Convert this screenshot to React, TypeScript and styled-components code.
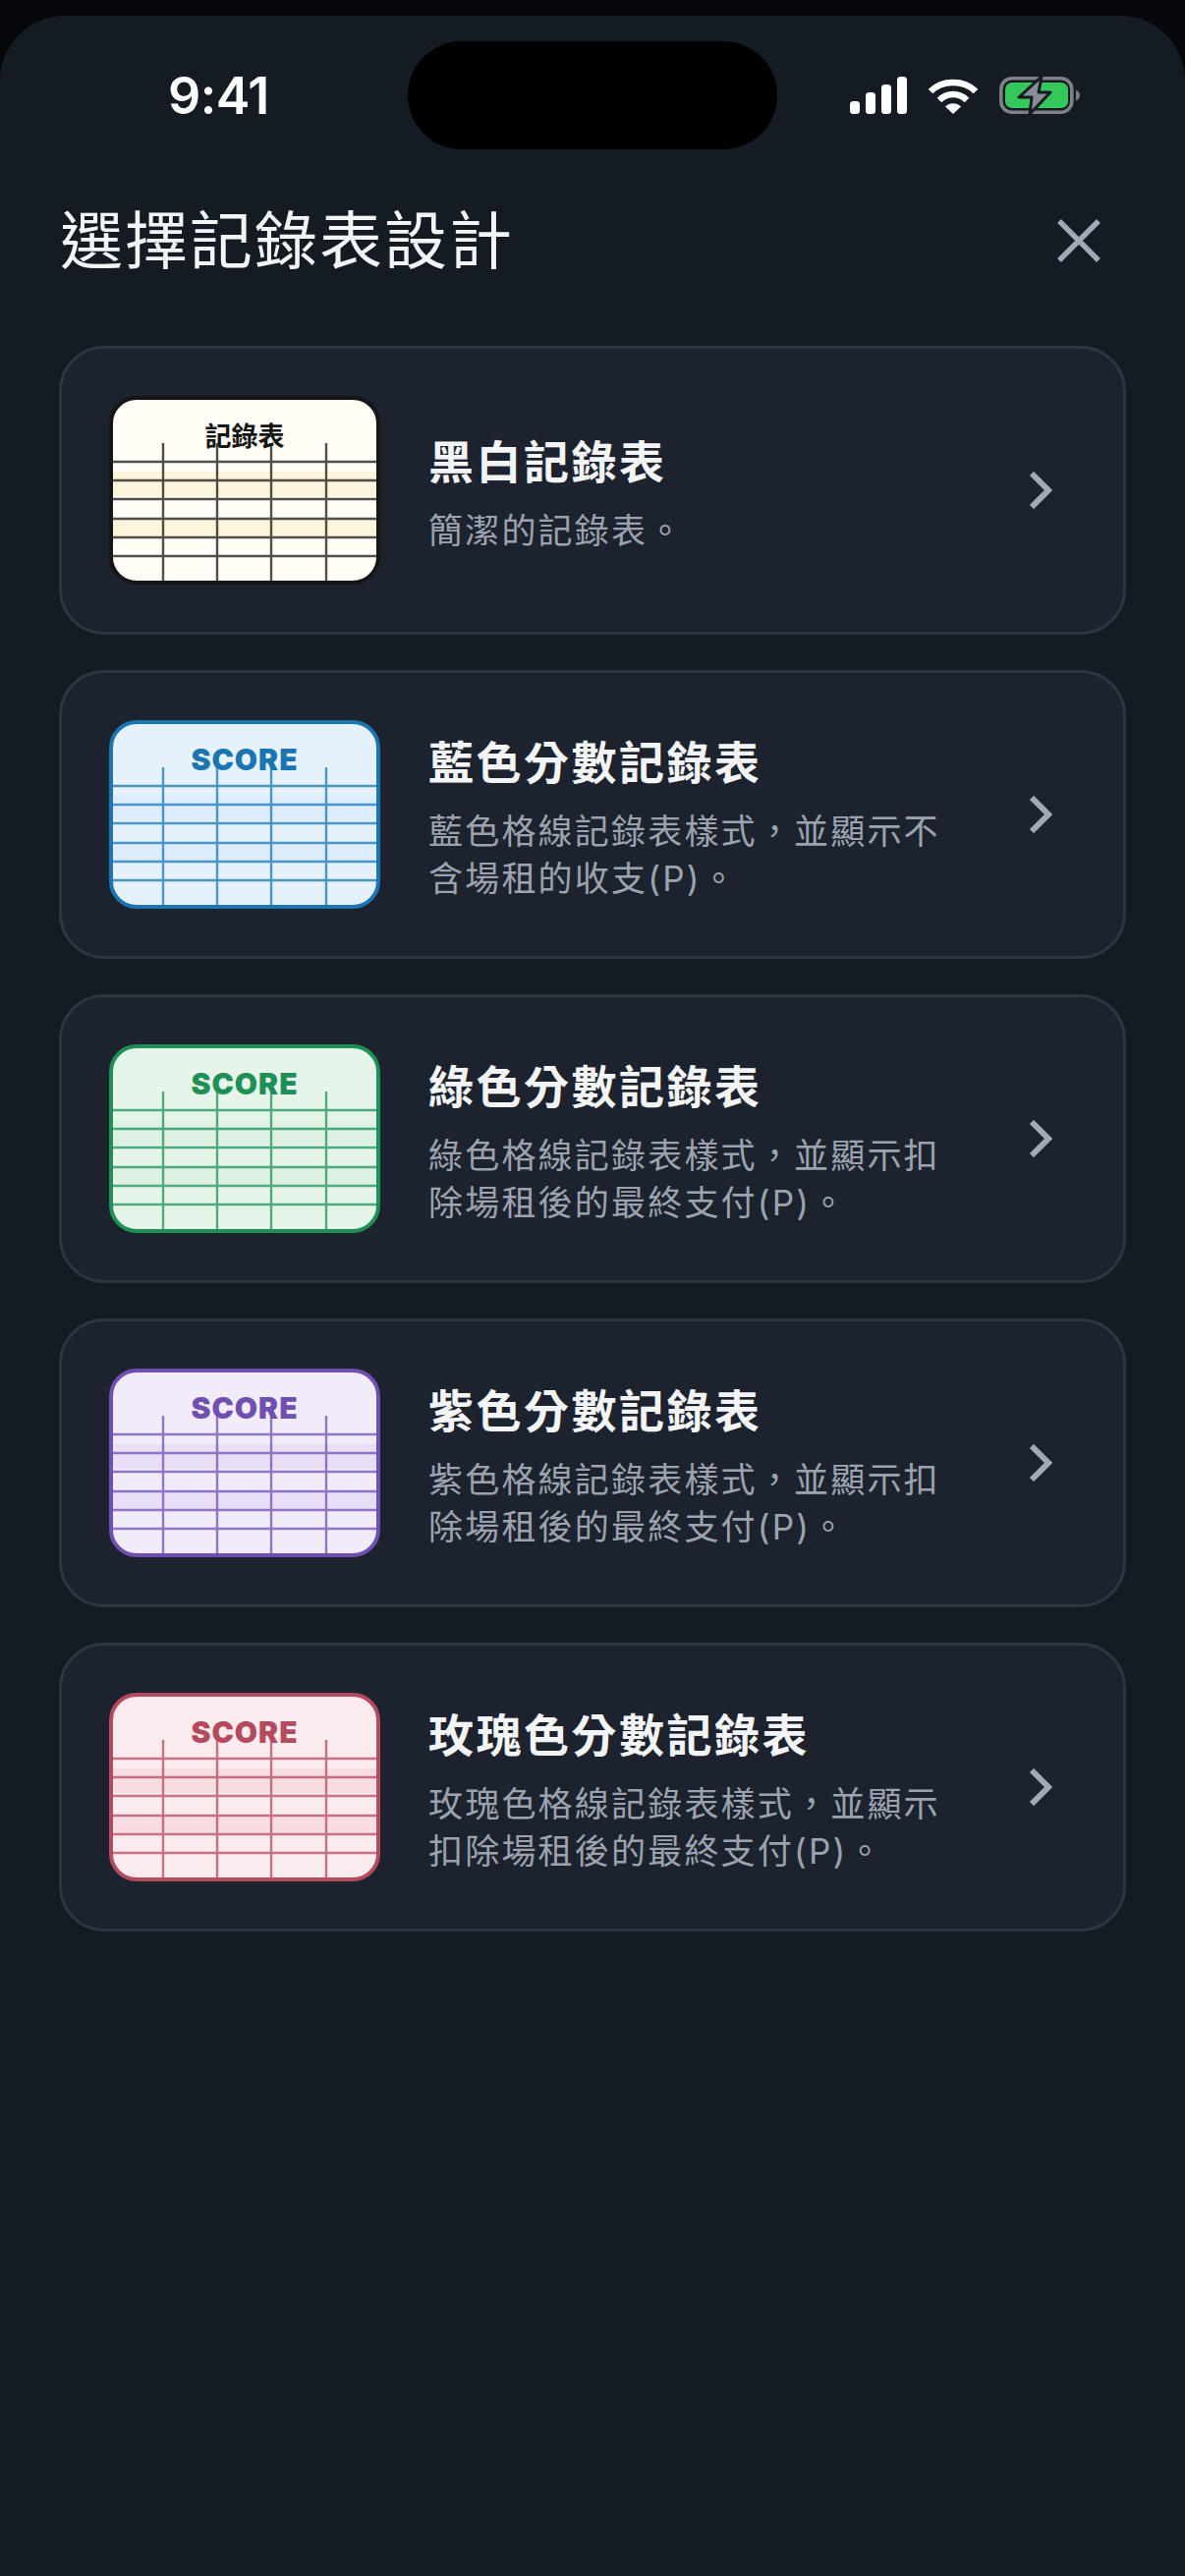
import styled, { createGlobalStyle } from "styled-components";

interface Palette {
  accent: string;
  paper: string;
  stripe: string;
}

interface Template {
  id: string;
  heading: string;
  label: string;
  description: string;
  palette: Palette;
}

const templates: Template[] = [
  {
    id: "mono",
    heading: "黑白記錄表",
    label: "記錄表",
    description: "簡潔的記錄表。",
    palette: { accent: "#151515", paper: "#fffdf6", stripe: "#fdf4dc" },
  },
  {
    id: "blue",
    heading: "藍色分數記錄表",
    label: "SCORE",
    description: "藍色格線記錄表樣式，並顯示不含場租的收支(P)。",
    palette: { accent: "#1a75b0", paper: "#e5f2fc", stripe: "#dcedfd" },
  },
  {
    id: "green",
    heading: "綠色分數記錄表",
    label: "SCORE",
    description: "綠色格線記錄表樣式，並顯示扣除場租後的最終支付(P)。",
    palette: { accent: "#1f8f58", paper: "#e5f5ea", stripe: "#ddf2e4" },
  },
  {
    id: "purple",
    heading: "紫色分數記錄表",
    label: "SCORE",
    description: "紫色格線記錄表樣式，並顯示扣除場租後的最終支付(P)。",
    palette: { accent: "#6f4fb0", paper: "#f2ecfa", stripe: "#e8def5" },
  },
  {
    id: "rose",
    heading: "玫瑰色分數記錄表",
    label: "SCORE",
    description: "玫瑰色格線記錄表樣式，並顯示扣除場租後的最終支付(P)。",
    palette: { accent: "#b34a5e", paper: "#fcebee", stripe: "#f8dde2" },
  },
];

const rowLines = [67, 86, 105, 125, 144, 163];
const columnLines = [55, 110, 165, 221];

const Sheet = ({ label, palette }: { label: string; palette: Palette }) => {
  const clipId = `sheet-${palette.accent.slice(1)}`;
  return (
    <SheetSvg viewBox="0 0 276 192">
      <defs>
        <clipPath id={clipId}>
          <rect x="2" y="2" width="272" height="188" rx="26" />
        </clipPath>
      </defs>
      <g clipPath={`url(#${clipId})`}>
        <rect width="276" height="192" fill={palette.paper} />
        <rect y="77" width="276" height="25" fill={palette.stripe} />
        <rect y="125" width="276" height="18" fill={palette.stripe} />
        <g stroke={palette.accent} strokeWidth="2.4" opacity="0.75">
          {rowLines.map((y) => (
            <line key={y} x1="0" x2="276" y1={y} y2={y} />
          ))}
          {columnLines.map((x) => (
            <line key={x} x1={x} x2={x} y1="48" y2="192" />
          ))}
        </g>
      </g>
      <rect x="2" y="2" width="272" height="188" rx="26" fill="none" stroke={palette.accent} strokeWidth="4" />
      <SheetLabel x="138" y="51" fill={palette.accent} $latin={label === "SCORE"}>
        {label}
      </SheetLabel>
    </SheetSvg>
  );
};

const App = () => {
  return (
    <>
      <GlobalStyle />
      <Screen>
        <StatusBar>
          <Clock>9:41</Clock>
          <Island />
          <StatusIcons>
            <svg width="58" height="38" viewBox="0 0 58 38" fill="#fff">
              <rect x="0" y="25" width="10" height="13" rx="3.5" />
              <rect x="16" y="16" width="10" height="22" rx="3.5" />
              <rect x="32" y="8" width="10" height="30" rx="3.5" />
              <rect x="48" y="0" width="10" height="38" rx="3.5" />
            </svg>
            <svg width="52" height="38" viewBox="0 0 52 38" fill="none">
              <path d="M3 15C15 3 37 3 49 15" stroke="#fff" strokeWidth="6.5" strokeLinecap="butt" />
              <path d="M12 24C20 16 32 16 40 24" stroke="#fff" strokeWidth="6.5" strokeLinecap="butt" />
              <path d="M18 30.5C22 26 30 26 34 30.5L26 38Z" fill="#fff" />
            </svg>
            <svg width="82" height="40" viewBox="0 0 82 40" fill="none">
              <rect x="1.8" y="2.8" width="72" height="34.5" rx="11" stroke="#7d8187" strokeWidth="3.6" />
              <rect x="6" y="7" width="64" height="26" rx="7" fill="#34c759" />
              <path d="M78 14.5c2.500 1 4 3 4 5.500s-1.500 4.500-4 5.500Z" fill="#7d8187" />
              <path d="M43 1L20 22H33L31 39L52 17H40Z" fill="#8a8e94" stroke="#141b23" strokeWidth="3" strokeLinejoin="round" />
            </svg>
          </StatusIcons>
        </StatusBar>

        <Header>
          <Title>選擇記錄表設計</Title>
          <CloseButton aria-label="close">
            <svg width="44" height="44" viewBox="0 0 44 44" fill="none" stroke="#a3a9b5" strokeWidth="5.5">
              <path d="M2 2L42 42M42 2L2 42" />
            </svg>
          </CloseButton>
        </Header>

        <CardList>
          {templates.map((template) => (
            <Card key={template.id}>
              <Sheet label={template.label} palette={template.palette} />
              <CardText>
                <CardHeading>{template.heading}</CardHeading>
                <CardDescription>{template.description}</CardDescription>
              </CardText>
              <Chevron width="24" height="38" viewBox="0 0 24 38" fill="none" stroke="#a3a9b5" strokeWidth="6">
                <path d="M3 2L20 19L3 36" />
              </Chevron>
            </Card>
          ))}
        </CardList>
      </Screen>
    </>
  );
};

export default App;

const GlobalStyle = createGlobalStyle`
  html, body {
    margin: 0;
    padding: 0;
    background: #05070b;
  }
  * {
    box-sizing: border-box;
  }
`;

const Screen = styled.div`
  margin-top: 16px;
  width: 1206px;
  height: 2606px;
  background: #141b23;
  border-radius: 66px 66px 0 0;
  padding: 0 60px;
  overflow: hidden;
  font-family: Inter, "Noto Sans CJK TC", sans-serif;
`;

const StatusBar = styled.div`
  display: grid;
  grid-template-columns: 355px 376px 1fr;
  align-items: center;
  height: 110px;
  margin-top: 26px;
`;

const Clock = styled.div`
  padding-left: 111px;
  font-size: 52px;
  font-weight: 600;
  letter-spacing: -0.5px;
  color: #fff;
`;

const Island = styled.div`
  width: 376px;
  height: 110px;
  border-radius: 55px;
  background: #000;
`;

const StatusIcons = styled.div`
  display: flex;
  align-items: center;
  gap: 21px;
  padding-left: 74px;
`;

const Header = styled.div`
  display: flex;
  align-items: center;
  justify-content: space-between;
  height: 80px;
  margin-top: 53px;
  padding-left: 1px;
`;

const Title = styled.h1`
  margin: 0;
  font-size: 64px;
  font-weight: 400;
  letter-spacing: 2px;
  line-height: 80px;
  color: #f3f4f6;
`;

const CloseButton = styled.button`
  display: flex;
  padding: 0;
  margin-right: 26px;
  border: none;
  background: none;
`;

const CardList = styled.div`
  display: flex;
  flex-direction: column;
  gap: 36px;
  margin-top: 67px;
`;

const Card = styled.div`
  display: flex;
  align-items: center;
  height: 294px;
  padding: 0 72px 0 48px;
  background: #1c232e;
  border: 3px solid #2e3541;
  border-radius: 46px;
`;

const SheetSvg = styled.svg`
  flex: none;
  width: 276px;
  height: 192px;
`;

const SheetLabel = styled.text<{ $latin: boolean }>`
  text-anchor: middle;
  font-family: ${({ $latin }) => ($latin ? "Inter, sans-serif" : '"Noto Sans CJK TC", sans-serif')};
  font-size: ${({ $latin }) => ($latin ? "30px" : "27px")};
  font-weight: ${({ $latin }) => ($latin ? 900 : 700)};
  letter-spacing: ${({ $latin }) => ($latin ? "1px" : "0")};
`;

const CardText = styled.div`
  display: flex;
  flex-direction: column;
  gap: 16px;
  width: 530px;
  margin-left: 49px;
  padding-top: 6px;
`;

const CardHeading = styled.div`
  font-size: 46px;
  font-weight: 700;
  line-height: 60px;
  letter-spacing: 2.5px;
  color: #f3f4f6;
`;

const CardDescription = styled.div`
  font-size: 35px;
  font-weight: 400;
  line-height: 48px;
  letter-spacing: 2.2px;
  color: #9ca3af;
`;

const Chevron = styled.svg`
  flex: none;
  margin-left: auto;
`;
